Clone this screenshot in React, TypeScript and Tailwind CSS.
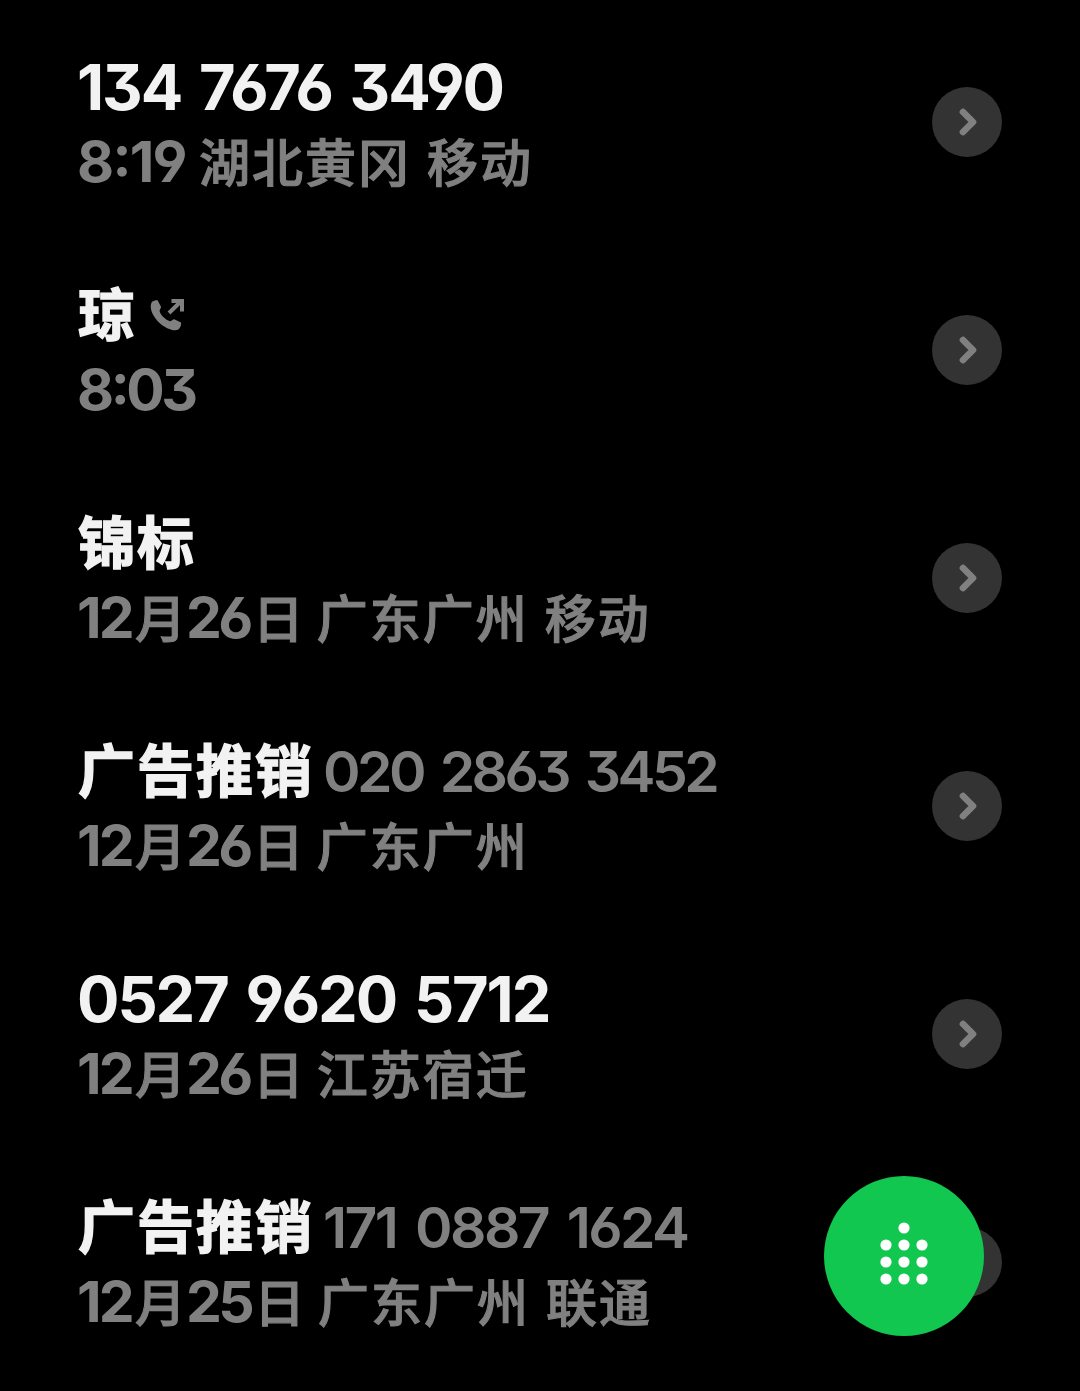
import { ChevronRight } from "lucide-react";

interface CallRecord {
    name?: string;
    phone?: string;
    phoneSpacing?: string;
    outgoing?: boolean;
    time?: string;
    timeSpacing?: string;
    date?: string[];
    place?: string;
    carrier?: string;
}

const calls: CallRecord[] = [
    {
        phone: "134 7676 3490",
        time: "8:19",
        timeSpacing: "leading-[78px] mr-0.5 tracking-[-1.7px]",
        place: "湖北黄冈",
        carrier: "移动",
    },
    { name: "琼", outgoing: true, time: "8:03", timeSpacing: "leading-[80px] tracking-[-3.4px]" },
    { name: "锦标", date: ["12", "26"], place: "广东广州", carrier: "移动" },
    {
        name: "广告推销",
        phone: "020 2863 3452",
        phoneSpacing: "tracking-[-3.6px] [word-spacing:6px]",
        date: ["12", "26"],
        place: "广东广州",
    },
    { phone: "0527 9620 5712", date: ["12", "26"], place: "江苏宿迁" },
    {
        name: "广告推销",
        phone: "171 0887 1624",
        phoneSpacing: "tracking-[-2.6px] [word-spacing:7px]",
        date: ["12", "25"],
        place: "广东广州",
        carrier: "联通",
    },
];

// Open 6/9, flat-top 3 and the raised colon
const digits = "font-['Inter',sans-serif] [font-feature-settings:'cv03','cv04','cv09','case']";
const hanzi = "font-['Noto_Sans_CJK_SC',sans-serif]";
const subDigits = `${digits} text-[57px] font-[650]`;
const subHanzi = `${hanzi} text-[51px] font-medium tracking-[2px] [-webkit-text-stroke:1.1px_#808080]`;

function OutgoingIcon() {
    return (
        <svg viewBox="0 0 34 32" className="ml-[13px] mt-[5px] h-8 w-[34px] self-center" fill="none">
            <path
                d="M1.8 3C3.5 1.5 5.8 1 7.6 1.2L11 7.8C11.2 9.5 9.4 10.8 9.6 12.2C11 16.6 15.5 20.6 20 22.2C21.5 22 22.8 20.4 24.2 20.2L31 23.4C31.6 26 30.2 29 28 30.8C24 32.5 15 29.5 9 23.5C3 17.5 -1.4 9 1.8 3Z"
                fill="#808080"
            />
            <path d="M19 14L31 2.2M21.5 2H32V12.5" stroke="#808080" strokeWidth={4} />
        </svg>
    );
}

function CallRow({ call }: { call: CallRecord }) {
    return (
        <div className="flex h-[228px] items-center justify-between px-[78px]">
            <div className="flex flex-col">
                <div className="flex h-[76px] items-baseline whitespace-pre leading-[75px] text-[#f2f2f2]">
                    {call.name && (
                        <span className={`${hanzi} text-[57px] font-bold tracking-[2px] [-webkit-text-stroke:1.4px_#f2f2f2]`}>
                            {call.name}
                        </span>
                    )}
                    {call.phone &&
                        (call.name ? (
                            <span className={`${digits} ml-[9px] text-[57px] font-semibold text-[#808080] ${call.phoneSpacing}`}>
                                {call.phone}
                            </span>
                        ) : (
                            <span className={`${digits} -ml-px text-[63px] font-bold leading-[82px] tracking-[-2.1px] [word-spacing:5px]`}>
                                {call.phone}
                            </span>
                        ))}
                    {call.outgoing && <OutgoingIcon />}
                </div>
                <div className="flex h-[76px] items-baseline whitespace-pre leading-[77px] text-[#808080]">
                    {call.time && <span className={`${subDigits} -ml-px ${call.timeSpacing}`}>{call.time}</span>}
                    {call.date && (
                        <>
                            <span className={`${subDigits} -ml-px mr-[3px] tracking-[-2.8px]`}>{call.date[0]}</span>
                            <span className={subHanzi}>月</span>
                            <span className={`${subDigits} -ml-[2px] mr-[3px] tracking-[-3.6px]`}>{call.date[1]}</span>
                            <span className={subHanzi}>日</span>
                        </>
                    )}
                    {call.place && <span className={`${subHanzi} ml-[11px]`}>{call.place}</span>}
                    {call.carrier && <span className={`${subHanzi} ml-4`}>{call.carrier}</span>}
                </div>
            </div>
            <div className="flex size-[70px] items-center justify-center rounded-full bg-[#333]">
                <ChevronRight className="ml-0.5 size-10 text-[#808080]" strokeWidth={4} />
            </div>
        </div>
    );
}

const dots = [
    [24, 6],
    [6, 23], [24, 23], [42, 23],
    [6, 40], [24, 40], [42, 40],
    [6, 57], [24, 57], [42, 57],
];

export default function App() {
    return (
        <div className="relative h-[1391px] w-[1080px] overflow-hidden bg-black pt-2">
            {calls.map((call, i) => (
                <CallRow key={i} call={call} />
            ))}
            <button className="absolute left-[824px] top-[1176px] flex size-40 items-center justify-center rounded-full bg-[#12c750]">
                <svg viewBox="0 0 48 64" className="-mt-1 h-16 w-12" fill="#fff">
                    {dots.map(([x, y]) => (
                        <circle key={`${x}-${y}`} cx={x} cy={y} r={5.6} />
                    ))}
                </svg>
            </button>
        </div>
    );
}
